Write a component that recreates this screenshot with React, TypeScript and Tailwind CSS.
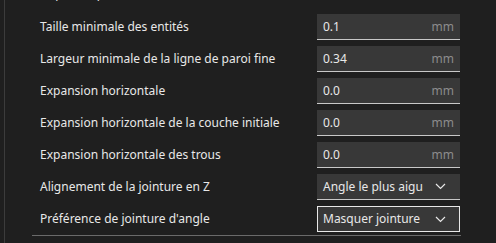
import React from "react";

type Row =
  | { label: string; kind: "num"; value: string }
  | { label: string; kind: "select"; value: string; focused?: boolean };

const rows: Row[] = [
  { label: "Taille minimale des entités", kind: "num", value: "0.1" },
  { label: "Largeur minimale de la ligne de paroi fine", kind: "num", value: "0.34" },
  { label: "Expansion horizontale", kind: "num", value: "0.0" },
  { label: "Expansion horizontale de la couche initiale", kind: "num", value: "0.0" },
  { label: "Expansion horizontale des trous", kind: "num", value: "0.0" },
  { label: "Alignement de la jointure en Z", kind: "select", value: "Angle le plus aigu" },
  { label: "Préférence de jointure d'angle", kind: "select", value: "Masquer jointure", focused: true },
];

function Chevron() {
  return (
    <svg width="11" height="7" viewBox="0 0 11 7" className="shrink-0">
      <path d="M1 1 L5.5 5.5 L10 1" fill="none" stroke="#e8e8e8" strokeWidth="1.2" />
    </svg>
  );
}

export default function App() {
  return (
    <div
      className="w-[496px] h-[243px] bg-[#1f1f1f] overflow-hidden text-[12px] text-[#e8e8e8]"
      style={{ fontFamily: '"Noto Sans", sans-serif' }}
    >
      <div className="ml-[4px] h-full border-l border-[#3c3c3c] flex flex-col">
        <div className="mt-[-18px] flex flex-col gap-[6px]">
          <div className="flex items-center h-[26px]">
            <div className="pl-[35px] w-[312px] mt-[-3px]">Imprimer parois fines</div>
            <div className="w-[16px] h-[16px] rounded-[3px] border border-[#8a8a8a] bg-[#2a2a2a] mb-[10px]" />
          </div>
          {rows.map((r) => (
            <div key={r.label} className="flex items-center h-[26px]">
              <div className="pl-[35px] w-[312px] whitespace-nowrap">{r.label}</div>
              {r.kind === "num" ? (
                <div className="w-[143px] h-[26px] bg-[#383838] border-b border-[#c8c8c8] flex items-center justify-between px-[6px]">
                  <span>{r.value}</span>
                  <span className="text-[#8c8c8c]">mm</span>
                </div>
              ) : r.focused ? (
                <div className="w-[143px] h-[26px] bg-[#383838] border border-[#e8e8e8] flex items-center justify-between pl-[5px] pr-[13px]">
                  <span>{r.value}</span>
                  <Chevron />
                </div>
              ) : (
                <div className="w-[143px] h-[26px] bg-[#383838] border-b border-[#c8c8c8] flex items-center justify-between pl-[6px] pr-[14px]">
                  <span>{r.value}</span>
                  <Chevron />
                </div>
              )}
            </div>
          ))}
        </div>
        <div className="ml-[27px] mt-[3px] w-[429px] border-t border-[#6a6a6a]" />
      </div>
    </div>
  );
}
